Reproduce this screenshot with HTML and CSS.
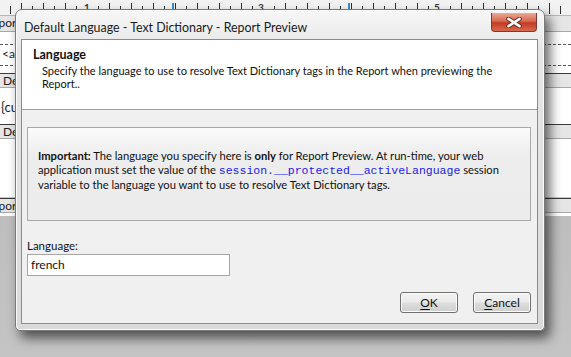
FILE: index.html
```html
<!DOCTYPE html>
<html>
<head>
<meta charset="utf-8">
<link rel="stylesheet" href="styles.css">
</head>
<body>
<div class="bg">
  <div class="ruler">
    <span class="num n1">1</span>
    <span class="mark m2"></span>
    <span class="num n3">3</span>
    <span class="mark m4"></span>
    <span class="num n5">5</span>
  </div>
  <div class="design">
    <div class="band b1"><span class="lbl">Report Header</span></div>
    <div class="row r1"><span class="lbl">&lt;a href</span></div>
    <div class="band b2"><span class="lbl">Detail</span></div>
    <div class="row r2"><span class="lbl">{cust}</span></div>
    <div class="band b3"><span class="lbl">Detail</span></div>
    <div class="row r3"></div>
    <div class="band b4"><span class="lbl">Report Footer</span></div>
    <div class="row r4"></div>
  </div>
</div>

<div class="dialog">
  <div class="titlebar">
    <span class="title">Default Language - Text Dictionary - Report Preview</span>
    <span class="close">
      <svg width="16" height="11" viewBox="0 0 16 11">
        <path d="M2.5 1.8 L13.5 9.2 M13.5 1.8 L2.5 9.2" stroke="#5a2a22" stroke-width="4.4" stroke-linecap="round"/>
        <path d="M2.5 1.8 L13.5 9.2 M13.5 1.8 L2.5 9.2" stroke="#ffffff" stroke-width="2.6" stroke-linecap="round"/>
      </svg>
    </span>
  </div>
  <div class="client">
    <div class="header">
      <div class="h-title">Language</div>
      <div class="h-desc">Specify the language to use to resolve Text Dictionary tags in the Report when previewing the Report..</div>
    </div>
    <div class="body">
      <div class="note">
        <b>Important:</b> The language you specify here is <b>only</b> for Report Preview. At run-time, your web application must set the value of the <span class="code">session.__protected__activeLanguage</span> session variable to the language you want to use to resolve Text Dictionary tags.
      </div>
      <div class="field">
        <div class="label">Language:</div>
        <div class="input">french</div>
      </div>
      <div class="buttons">
        <span class="btn"><u>O</u>K</span>
        <span class="btn"><u>C</u>ancel</span>
      </div>
    </div>
  </div>
</div>
</body>
</html>
```

FILE: styles.css
```css
html, body {
  margin: 0;
  padding: 0;
}
body {
  width: 571px;
  height: 357px;
  overflow: hidden;
  position: relative;
  background: linear-gradient(#b4b4b4, #c4c4c4);
  font-family: "Lato", "Liberation Sans", sans-serif;
}
.bg {
  display: flex;
  flex-direction: column;
}
.ruler {
  position: relative;
  height: 15px;
  background-color: #f2f2f2;
  background-image:
    repeating-linear-gradient(90deg, transparent 0 10px, #2e2e2e 10px 11px),
    repeating-linear-gradient(90deg, transparent 0 21px, #2e2e2e 21px 22px);
  background-size: 100% 8px, 100% 11px;
  background-repeat: no-repeat;
  background-position: 0 6px, 0 3px;
  border-bottom: 1px solid #b8b8b8;
}
.num {
  position: absolute;
  top: 1px;
  font-size: 10px;
  line-height: 12px;
  font-weight: bold;
  color: #333;
  background: #f2f2f2;
  padding: 0 1px;
}
.n1 { left: 83px; }
.n3 { left: 257px; }
.n5 { left: 433px; }
.mark {
  position: absolute;
  top: 3px;
  width: 2px;
  height: 11px;
  background: #3b8fd9;
}
.m2 { left: 172px; }
.m4 { left: 348px; }
.design {
  background: #ffffff;
  display: flex;
  flex-direction: column;
  font-size: 12px;
  color: #222;
}
.lbl {
  display: block;
  white-space: nowrap;
  overflow: hidden;
}
.band {
  background: #e6e6e6;
  border-top: 1px solid #3a3a3a;
  border-bottom: 1px solid #a8a8a8;
  height: 13px;
  line-height: 13px;
}
.band .lbl { text-indent: -15px; }
.b2 .lbl, .b3 .lbl { text-indent: 3px; }
.b1 { height: 15px; border-top: none; line-height: 14px; }
.row { background: #fff; }
.r1 {
  height: 41px;
}
.r1 .lbl {
  margin-top: 12px;
  height: 20px;
  line-height: 18px;
  text-indent: 2px;
  border-top: 1px dashed #555;
  border-bottom: 1px dashed #555;
}
.r2 { height: 36px; }
.r2 .lbl { text-indent: 1px; font-size: 13px; line-height: 14px; margin-top: 12px; }
.r3 { height: 58px; border-bottom: 1px solid #c8c8c8; }
.r4 { height: 3px; }

.dialog {
  position: absolute;
  left: 15px;
  top: 9px;
  width: 528px;
  height: 320px;
  border: 1px solid #7a7a7a;
  border-radius: 7px 7px 5px 5px;
  background: linear-gradient(#f7f7f7, #e6e6e6 40px, #dadada);
  box-shadow: 5px 7px 12px rgba(0, 0, 0, 0.6), inset 0 0 0 1px #fafafa;
  display: flex;
  flex-direction: column;
}
.titlebar {
  height: 30px;
  display: flex;
  align-items: flex-start;
  justify-content: space-between;
}
.title {
  margin: 10px 0 0 8px;
  font-size: 12.4px;
  color: #1a1a1a;
  white-space: nowrap;
}
.close {
  width: 46px;
  height: 19px;
  margin: 3px 7px 0 0;
  box-sizing: border-box;
  border: 1px solid #7d3a2e;
  border-top: none;
  border-radius: 0 0 4px 4px;
  background: linear-gradient(#eaa896, #d66a52 45%, #c23b21 55%, #d86a4f);
  display: flex;
  align-items: center;
  justify-content: center;
}
.client {
  flex: 1;
  margin: 0 6px 6px 5px;
  border: 1px solid #8b8b8b;
  background: #f0f0f0;
  display: flex;
  flex-direction: column;
}
.header {
  background: #ffffff;
  height: 70px;
  box-sizing: border-box;
  border-bottom: 1px solid #a0a0a0;
  padding: 7px 10px 0 11px;
}
.h-title {
  font-weight: bold;
  font-size: 12.5px;
  line-height: 15px;
  color: #111;
}
.h-desc {
  font-size: 11px;
  line-height: 13px;
  color: #111;
  padding: 2px 10px 0 9px;
}
.body {
  flex: 1;
  display: flex;
  flex-direction: column;
  padding: 17px 6px 10px 5px;
}
.note {
  height: 94px;
  box-sizing: border-box;
  border: 1px solid #a9a9a9;
  background: linear-gradient(#fbfbfb, #ededed 30%, #ececec);
  padding: 21px 10px 0 10px;
  font-size: 11.2px;
  line-height: 14px;
  color: #111;
}
.code {
  font-family: "Liberation Mono", monospace;
  font-size: 11.5px;
  color: #1c1ce8;
}
.field {
  margin-top: 18px;
}
.label {
  font-size: 11.5px;
  color: #111;
  line-height: 14px;
}
.input {
  margin-top: 1px;
  width: 203px;
  height: 22px;
  box-sizing: border-box;
  border: 1px solid #a5a5a5;
  background: #fff;
  font-size: 12px;
  line-height: 20px;
  padding-left: 3px;
  color: #111;
}
.buttons {
  display: flex;
  justify-content: flex-end;
  gap: 15px;
  margin-top: 16px;
}
.btn {
  width: 58px;
  height: 21px;
  box-sizing: border-box;
  border: 1px solid #707070;
  border-radius: 3px;
  background: linear-gradient(#f2f2f2, #ebebeb 48%, #dddddd 52%, #cfcfcf);
  box-shadow: inset 0 0 0 1px #fcfcfc;
  font-size: 12px;
  line-height: 19px;
  text-align: center;
  color: #111;
}
.btn u { text-underline-offset: 2px; }
```
